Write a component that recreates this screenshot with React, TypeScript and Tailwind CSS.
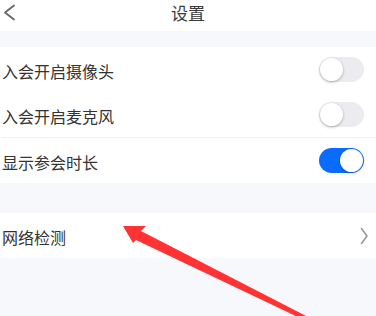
const font = { fontFamily: '"Noto Sans CJK SC", "Noto Sans", sans-serif' };

function Toggle({ on }: { on: boolean }) {
    return (
        <div
            className={`w-[45px] h-[25px] rounded-full p-[1px] flex items-center ${
                on ? "bg-[#0a6cff] justify-end" : "bg-[#ececf0] justify-start"
            }`}
        >
            <div className="w-[23px] h-[23px] rounded-full bg-white shadow-[0_1px_3px_rgba(0,0,0,0.3)]" />
        </div>
    );
}

export default function App() {
    return (
        <div
            className="relative w-[376px] h-[316px] bg-[#f7f8fc] overflow-hidden text-[#333]"
            style={font}
        >
            <div className="h-[31px] bg-white grid grid-cols-[40px_1fr_40px] items-start">
                <svg width="20" height="26" viewBox="0 0 20 26" className="mt-[0px]">
                    <polyline points="14,5.5 5,12.5 14,19.5" fill="none" stroke="#666" strokeWidth="1.8" strokeLinecap="round" strokeLinejoin="round" />
                </svg>
                <div className="text-center text-[17px] leading-none mt-[4px] text-[#3a3a3a]">设置</div>
                <div />
            </div>
            <div className="h-[16px]" />
            <div className="bg-white">
                <div className="h-[45px] flex items-center justify-between pl-[2px] pr-[12px]">
                    <span className="text-[16px] mt-[3px]">入会开启摄像头</span>
                    <Toggle on={false} />
                </div>
                <div className="h-[45px] flex items-center justify-between pl-[2px] pr-[12px]">
                    <span className="text-[16px] mt-[3px]">入会开启麦克风</span>
                    <Toggle on={false} />
                </div>
                <div className="ml-[2px] h-px bg-[#f0f0f3]" />
                <div className="h-[45px] flex items-center justify-between pl-[2px] pr-[12px]">
                    <span className="text-[16px] mt-[2px]">显示参会时长</span>
                    <Toggle on={true} />
                </div>
            </div>
            <div className="h-[30px]" />
            <div className="bg-white h-[45px] flex items-center justify-between pl-[2px] pr-[7px]">
                <span className="text-[16px] mt-[2px]">网络检测</span>
                <svg width="10" height="18" viewBox="0 0 10 18">
                    <polyline points="2.5,1.5 8,9 2.5,16.5" fill="none" stroke="#999" strokeWidth="1.6" strokeLinecap="round" strokeLinejoin="round" />
                </svg>
            </div>
            <svg
                className="absolute inset-0 pointer-events-none"
                width="376"
                height="316"
                viewBox="0 0 376 316"
            >
                <polygon
                    points="123,226 146,226 141,231 310,318 300,318 136,240 133,243"
                    fill="#ff3333"
                />
            </svg>
        </div>
    );
}
